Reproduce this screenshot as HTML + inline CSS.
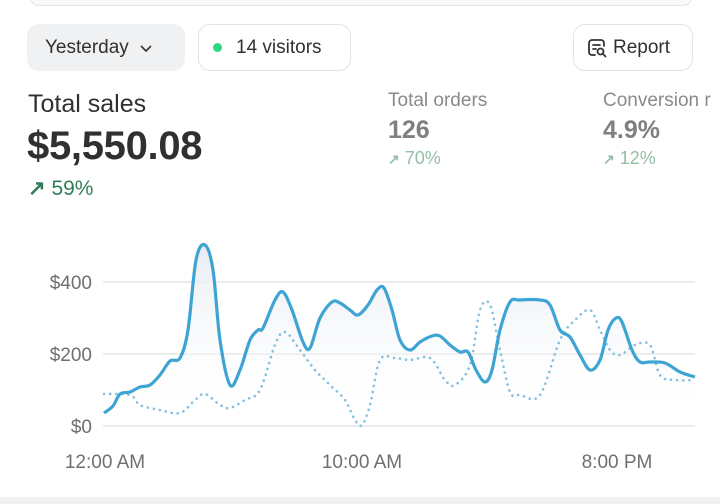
<!DOCTYPE html>
<html><head><meta charset="utf-8"><style>
body{margin:0;width:720px;height:504px;background:#fff;position:relative;overflow:hidden;font-family:"Liberation Sans",sans-serif;color:#303030}
.a{position:absolute;white-space:nowrap}
.btn{position:absolute;border-radius:12px;box-sizing:border-box;font-size:19px;display:flex;align-items:center}
</style></head><body>
<div class="a" style="left:30px;top:-12px;width:660px;height:16px;border:1px solid #e4e4e4;border-radius:10px;background:#fafafa"></div>
<div class="btn" style="left:27px;top:24px;width:158px;height:47px;background:#f0f1f2;padding-left:18px">Yesterday<svg width="14" height="10" style="margin-left:10px" viewBox="0 0 14 10"><path d="M2 3l5 5 5-5" fill="none" stroke="#333" stroke-width="1.6"/></svg></div>
<div class="btn" style="left:198px;top:24px;width:153px;height:47px;border:1.5px solid #e3e3e3;padding-left:14px"><span style="width:9px;height:9px;border-radius:50%;background:#2fd884;display:inline-block;margin-right:14px"></span>14 visitors</div>
<div class="btn" style="left:573px;top:24px;width:120px;height:47px;border:1.5px solid #e3e3e3;padding-left:12px"><svg width="22" height="22" viewBox="0 0 22 22" style="margin-right:5px"><path d="M9 18H6a3 3 0 0 1-3-3V6a3 3 0 0 1 3-3h9a3 3 0 0 1 3 3v3M7 8h7M7 12h3" fill="none" stroke="#333" stroke-width="1.8" stroke-linecap="round"/><circle cx="14.5" cy="14.5" r="3" fill="none" stroke="#333" stroke-width="1.8"/><path d="M17 17l2.5 2.5" stroke="#333" stroke-width="1.8" stroke-linecap="round"/></svg>Report</div>
<div class="a" style="left:28px;top:90px;font-size:25px">Total sales</div>
<div class="a" style="left:27px;top:124px;font-size:40px;font-weight:bold;letter-spacing:-0.3px">$5,550.08</div>
<div class="a" style="left:28px;top:176px;font-size:21px;color:#2f7d55"><b style="font-size:21px">↗</b> 59%</div>
<div class="a" style="left:388px;top:90px;font-size:19px;color:#8a8a8a">Total orders</div>
<div class="a" style="left:388px;top:116px;font-size:25px;color:#7f7f7f;font-weight:bold">126</div>
<div class="a" style="left:388px;top:148px;font-size:18px;color:#93bfa6"><b style="font-size:14px">↗</b> 70%</div>
<div class="a" style="left:603px;top:90px;font-size:19px;color:#8a8a8a">Conversion r</div>
<div class="a" style="left:603px;top:116px;font-size:25px;color:#7f7f7f;font-weight:bold">4.9%</div>
<div class="a" style="left:603px;top:148px;font-size:18px;color:#93bfa6"><b style="font-size:14px">↗</b> 12%</div>
<svg class="a" style="left:0;top:0" width="720" height="504">
<defs><linearGradient id="g" x1="0" y1="0" x2="0" y2="1"><stop offset="0" stop-color="#e8ecf3"/><stop offset="1" stop-color="#fff" stop-opacity="0"/></linearGradient></defs>
<g stroke="#e6e6e6" stroke-width="1.5"><line x1="103" y1="282" x2="695" y2="282"/><line x1="103" y1="354" x2="695" y2="354"/><line x1="103" y1="426" x2="695" y2="426"/></g>
<g font-size="19" fill="#6f6f6f" font-family="Liberation Sans,sans-serif" text-anchor="end"><text x="92" y="289">$400</text><text x="92" y="361">$200</text><text x="92" y="433">$0</text></g>
<g font-size="19" fill="#6f6f6f" font-family="Liberation Sans,sans-serif" text-anchor="middle"><text x="105" y="468">12:00 AM</text><text x="362" y="468">10:00 AM</text><text x="617" y="468">8:00 PM</text></g>
<path id="fill" fill="url(#g)"/>
<path id="dot" fill="none" stroke="#86bfdf" stroke-width="2.6" stroke-dasharray="0.1 6" stroke-linecap="round"/>
<path id="main" fill="none" stroke="#3ea4d3" stroke-width="3.2" stroke-linejoin="round"/>
</svg>
<div class="a" style="left:0;top:497px;width:720px;height:7px;background:#f1f1f1"></div>
<script>
function cr(p){var d="M"+p[0][0]+" "+p[0][1];for(var i=0;i<p.length-1;i++){var a=p[i-1]||p[i],b=p[i],c=p[i+1],e=p[i+2]||c;d+=" C"+(b[0]+(c[0]-a[0])/6)+" "+(b[1]+(c[1]-a[1])/6)+" "+(c[0]-(e[0]-b[0])/6)+" "+(c[1]-(e[1]-b[1])/6)+" "+c[0]+" "+c[1];}return d;}
var m=[[104,413],[113,406],[120,394],[130,392],[140,387],[150,385],[160,375],[170,361],[180,358],[188,330],[196,260],[205,245],[213,270],[220,340],[230,385],[240,370],[250,340],[258,330],[263,328],[275,300],[283,292],[292,310],[303,342],[310,348],[320,318],[332,302],[340,303],[350,310],[358,315],[368,305],[377,290],[384,288],[392,310],[400,340],[410,350],[420,342],[432,336],[440,336],[450,345],[460,352],[468,352],[476,370],[485,382],[492,370],[500,330],[510,302],[520,300],[540,300],[550,305],[560,330],[570,337],[580,355],[590,370],[600,360],[608,330],[616,318],[622,322],[632,350],[640,362],[650,362],[665,363],[680,372],[695,377]];
var t=[[104,394],[130,395],[140,405],[160,410],[180,413],[195,400],[205,394],[220,405],[230,408],[245,400],[260,390],[275,345],[285,332],[300,350],[315,370],[330,385],[345,400],[355,420],[362,425],[370,405],[380,360],[395,358],[410,360],[430,358],[445,380],[455,385],[470,365],[480,310],[490,305],[500,350],[510,392],[520,395],[540,395],[560,340],[575,320],[590,310],[600,330],[610,350],[620,355],[635,345],[650,345],[660,375],[675,380],[695,380]];
var dm=cr(m);document.getElementById('main').setAttribute('d',dm);
document.getElementById('fill').setAttribute('d',dm+" L695 426 L104 426 Z");
document.getElementById('dot').setAttribute('d',cr(t));
</script>
</body></html>
